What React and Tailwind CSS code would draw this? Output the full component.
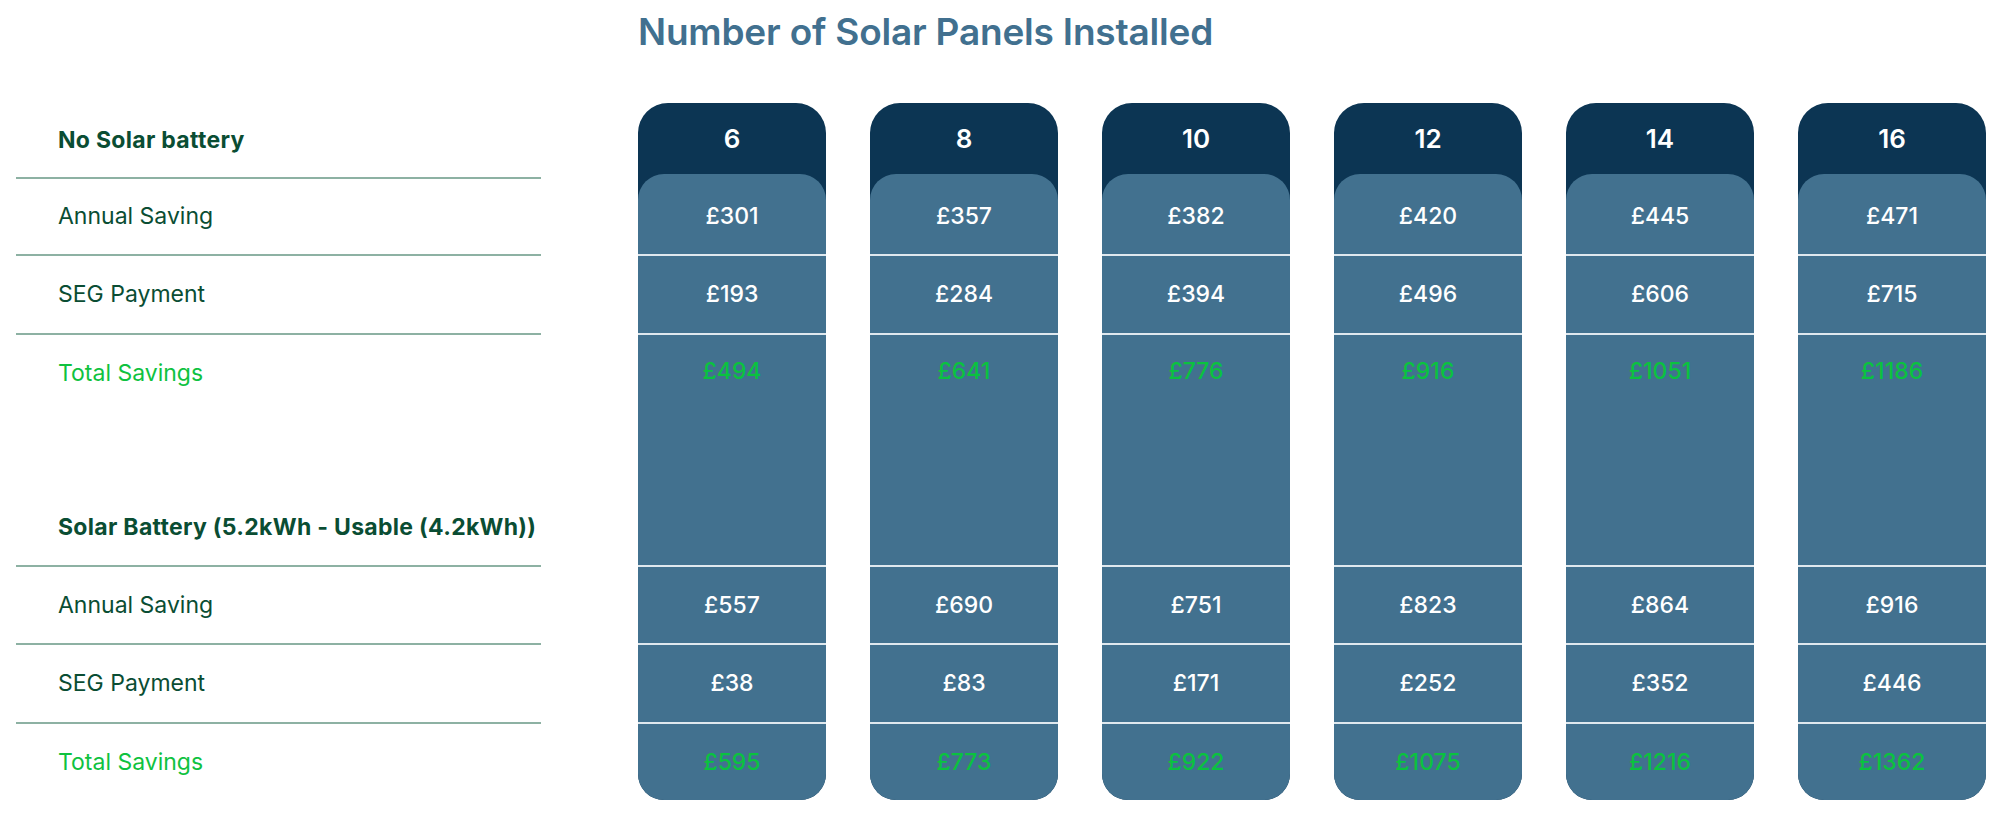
import React from "react"

const columns = [
  { panels: 6, noBattery: [301, 193, 494], battery: [557, 38, 595] },
  { panels: 8, noBattery: [357, 284, 641], battery: [690, 83, 773] },
  { panels: 10, noBattery: [382, 394, 776], battery: [751, 171, 922] },
  { panels: 12, noBattery: [420, 496, 916], battery: [823, 252, 1075] },
  { panels: 14, noBattery: [445, 606, 1051], battery: [864, 352, 1216] },
  { panels: 16, noBattery: [471, 715, 1186], battery: [916, 446, 1362] },
]

function Value({ amount, total }) {
  return (
    <span className={total ? "text-[#0ac23f]" : "text-white"}>£{amount}</span>
  )
}

function PanelColumn({ col }) {
  const [a1, s1, t1] = col.noBattery
  const [a2, s2, t2] = col.battery
  return (
    <div className="w-[188px] h-[697px] flex flex-col bg-[#0c3553] rounded-t-[30px] rounded-b-[26px] overflow-hidden">
      <div className="h-[71px] flex items-center justify-center text-white text-[26px] font-semibold">
        {col.panels}
      </div>
      <div className="flex-1 flex flex-col bg-[#42718f] rounded-t-[26px] text-[23px] font-medium">
        <div className="h-[80px] pt-[4px] flex items-center justify-center">
          <Value amount={a1} />
        </div>
        <div className="h-[79px] border-t-2 border-[#dfe8ee] flex items-center justify-center">
          <Value amount={s1} />
        </div>
        <div className="h-[232px] border-t-2 border-[#dfe8ee] flex flex-col">
          <div className="h-[72px] flex items-center justify-center">
            <Value amount={t1} total />
          </div>
        </div>
        <div className="h-[78px] border-t-2 border-[#dfe8ee] flex items-center justify-center">
          <Value amount={a2} />
        </div>
        <div className="h-[79px] border-t-2 border-[#dfe8ee] flex items-center justify-center">
          <Value amount={s2} />
        </div>
        <div className="h-[78px] border-t-2 border-[#dfe8ee] flex items-center justify-center">
          <Value amount={t2} total />
        </div>
      </div>
    </div>
  )
}

function LabelRow({ height, line, bold, green, children }) {
  return (
    <div
      className={`${height} flex items-center pl-[42px] ${line ? "border-b-2 border-[#8db1a3]" : ""} ${
        bold ? "font-bold tracking-[0.3px]" : ""
      } ${green ? "text-[#0fc23f]" : "text-[#0a4d33]"}`}
    >
      {children}
    </div>
  )
}

export default function App() {
  return (
    <div className="w-[1992px] h-[818px] bg-white font-['Inter',sans-serif]">
      <div className="h-[103px] pl-[638px] pt-[9px]">
        <h1 className="text-[37px] leading-[46px] font-semibold text-[#41708f] tracking-[-0.2px]">
          Number of Solar Panels Installed
        </h1>
      </div>

      <div className="flex">
        <div className="w-[525px] ml-[16px] mr-[97px] flex flex-col text-[23px]">
          <LabelRow height="h-[76px]" line bold>No Solar battery</LabelRow>
          <LabelRow height="h-[77px]" line>Annual Saving</LabelRow>
          <LabelRow height="h-[79px]" line>SEG Payment</LabelRow>
          <LabelRow height="h-[77px]" green>Total Savings</LabelRow>
          <div className="h-[77px]" />
          <LabelRow height="h-[78px]" line bold>Solar Battery (5.2kWh - Usable (4.2kWh))</LabelRow>
          <LabelRow height="h-[78px]" line>Annual Saving</LabelRow>
          <LabelRow height="h-[79px]" line>SEG Payment</LabelRow>
          <LabelRow height="h-[76px]" green>Total Savings</LabelRow>
        </div>

        <div className="flex gap-[44px]">
          {columns.map((col) => (
            <PanelColumn key={col.panels} col={col} />
          ))}
        </div>
      </div>
    </div>
  )
}
